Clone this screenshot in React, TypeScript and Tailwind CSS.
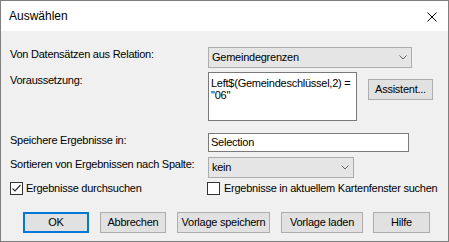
import React from "react";

function Chevron() {
  return (
    <svg width="8" height="5" viewBox="0 0 8 5" className="shrink-0">
      <polyline points="0.5,0.5 4,4 7.5,0.5" fill="none" stroke="#606060" strokeWidth="1" />
    </svg>
  );
}

function Checkbox({ checked }: { checked?: boolean }) {
  return (
    <div className="w-[13px] h-[13px] border border-[#333333] bg-white shrink-0 flex items-center justify-center">
      {checked && (
        <svg width="11" height="11" viewBox="0 0 11 11">
          <polyline points="1.5,5.5 4,8 9.5,2" fill="none" stroke="#333333" strokeWidth="1.2" />
        </svg>
      )}
    </div>
  );
}

function Btn({ children, w, ml, primary }: { children: React.ReactNode; w: string; ml: string; primary?: boolean }) {
  return (
    <div
      className={`${w} ${ml} h-[21px] bg-[#e1e1e1] flex items-center justify-center leading-[13px] ${
        primary ? "border-2 border-[#0078d7]" : "border border-[#adadad]"
      }`}
    >
      {children}
    </div>
  );
}

export default function App() {
  return (
    <div className="w-[449px] h-[242px] border border-[#7f7f7f] bg-[#f0f0f0] flex flex-col overflow-hidden font-['Liberation_Sans',Arial,sans-serif] text-black">
      <div className="h-[30px] bg-white flex items-center justify-between pl-[8px] pr-[11px] shrink-0">
        <span className="text-[12px] leading-[14px]">Auswählen</span>
        <svg width="10" height="10" viewBox="0 0 10 10" className="mt-[2px]">
          <line x1="0.5" y1="0.5" x2="9.5" y2="9.5" stroke="#000" strokeWidth="1" />
          <line x1="9.5" y1="0.5" x2="0.5" y2="9.5" stroke="#000" strokeWidth="1" />
        </svg>
      </div>
      <div className="flex flex-col pl-[9px] text-[11px] leading-[13px] tracking-[-0.25px]">
        <div className="flex mt-[16px] h-[21px]">
          <div className="w-[198px] pt-[1px]">Von Datensätzen aus Relation:</div>
          <div className="w-[204px] h-[21px] border border-[#adadad] bg-[#e5e5e5] flex items-center justify-between pl-[3px] pr-[4px]">
            <span>Gemeindegrenzen</span>
            <Chevron />
          </div>
        </div>
        <div className="flex items-start mt-[4px]">
          <div className="w-[198px] pt-[2px]">Voraussetzung:</div>
          <div className="w-[149px] h-[49px] border border-[#7a7a7a] bg-white pl-[2px] pt-[4px] leading-[12px]">
            <div>Left$(Gemeindeschlüssel,2) =</div>
            <div>"06"</div>
          </div>
          <div className="ml-[11px] mt-[7px] w-[65px] h-[21px] border border-[#adadad] bg-[#e1e1e1] flex items-center justify-center">
            Assistent...
          </div>
        </div>
        <div className="flex mt-[12px]">
          <div className="w-[198px] pt-[1px]">Speichere Ergebnisse in:</div>
          <div className="w-[201px] h-[19px] border border-[#7a7a7a] bg-white pl-[2px] flex items-center">
            Selection
          </div>
        </div>
        <div className="flex mt-[5px]">
          <div className="w-[198px] pt-[1px]">Sortieren von Ergebnissen nach Spalte:</div>
          <div className="w-[146px] h-[21px] border border-[#adadad] bg-[#e5e5e5] flex items-center justify-between pl-[3px] pr-[4px]">
            <span>kein</span>
            <Chevron />
          </div>
        </div>
        <div className="flex mt-[4px] h-[13px]">
          <div className="w-[197px] flex items-start">
            <Checkbox checked />
            <span className="ml-[3px]">Ergebnisse durchsuchen</span>
          </div>
          <div className="flex items-start">
            <Checkbox />
            <span className="ml-[4px]">Ergebnisse in aktuellem Kartenfenster suchen</span>
          </div>
        </div>
        <div className="flex mt-[17px]">
          <Btn w="w-[66px]" ml="ml-[13px]" primary>OK</Btn>
          <Btn w="w-[66px]" ml="ml-[11px]">Abbrechen</Btn>
          <Btn w="w-[93px]" ml="ml-[11px]">Vorlage speichern</Btn>
          <Btn w="w-[82px]" ml="ml-[11px]">Vorlage laden</Btn>
          <Btn w="w-[57px]" ml="ml-[10px]">Hilfe</Btn>
        </div>
      </div>
    </div>
  );
}
